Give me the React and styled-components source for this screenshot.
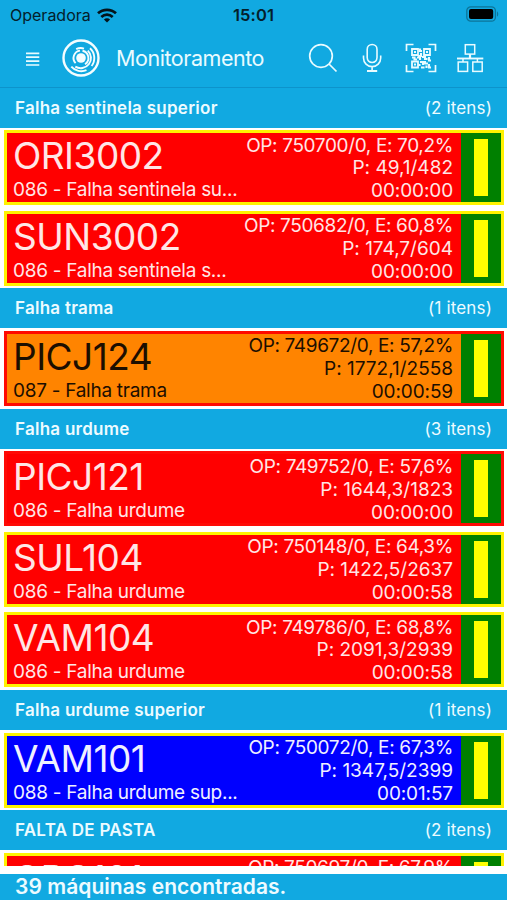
import React from 'react';
import styled, { createGlobalStyle } from 'styled-components'

const GlobalStyle = createGlobalStyle`
* { box-sizing: border-box; }
body {
  margin: 0;
  background: #fff;
  font-family: Inter, "Liberation Sans", sans-serif;
  font-feature-settings: "calt" 0;
}
`

const Container = styled.div`
height: 900px;
display: flex;
flex-direction: column;
overflow: hidden;
background: #fff;
`

const StatusBar = styled.div`
height: 30px;
padding: 0 8px 0 10px;
display: grid;
grid-template-columns: 1fr auto 1fr;
align-items: center;
background: #11a9e1;
color: #04202b;
font-size: 16px;
`

const Carrier = styled.div`
display: flex;
align-items: center;
gap: 6px;
`

const Clock = styled.div`
font-size: 16.5px;
font-weight: 600;
letter-spacing: 0.1px;
margin-right: 2px;
`

const BatteryBox = styled.div`
display: flex;
justify-content: flex-end;
padding-bottom: 2px;
`

const Header = styled.div`
height: 57.5px;
padding: 0 23px 0 25px;
display: flex;
align-items: center;
background: #11a9e1;
border-bottom: 1px solid #0d93cb;
color: #e9fbff;
`

const MenuButton = styled.div`
display: flex;
padding-top: 2px;
`

const Title = styled.h1`
margin: 0;
flex: 1;
padding: 0 0 1px 15px;
font-size: 21.5px;
font-weight: 400;
letter-spacing: -0.45px;
white-space: nowrap;
`

const Logo = styled.div`
display: flex;
padding-left: 21px;
`

const Actions = styled.div`
display: flex;
align-items: center;
`

const Action = styled.div`
display: flex;
margin-left: ${(props) => props.$gap || 0}px;
`

const List = styled.div`
height: 778px;
overflow: hidden;
`

const SectionHeader = styled.div`
height: 40px;
padding: 0 15px;
display: flex;
align-items: center;
justify-content: space-between;
background: #11a9e1;
color: #edfbff;
font-size: 17px;
`

const SectionTitle = styled.div`
font-weight: 600;
letter-spacing: 0.26px;
`

const SectionCount = styled.div`
letter-spacing: 0.15px;
`

const Row = styled.div`
height: 80.4px;
padding: 2.7px 3px 2.7px 4px;
`

const Card = styled.div`
height: 75px;
display: flex;
border: 3px solid ${(props) => props.$border};
background: ${(props) => props.$bg};
color: ${(props) => props.$color};
`

const Machine = styled.div`
flex: 1;
min-width: 0;
padding: 1px 0 0 6px;
display: flex;
flex-direction: column;
white-space: nowrap;
`

const MachineName = styled.div`
height: 44px;
line-height: 44px;
font-size: 37px;
letter-spacing: -0.5px;
`

const Reason = styled.div`
height: 24px;
line-height: 24px;
font-size: 19px;
letter-spacing: -0.28px;
`

const Numbers = styled.div`
padding: 1.4px 8px 0 0;
text-align: right;
font-size: 19px;
line-height: 22.9px;
white-space: nowrap;
`

const NumberLine = styled.div`
letter-spacing: ${(props) => props.$spacing || 0}px;
`

const Gauge = styled.div`
width: 40px;
padding-right: 1px;
display: flex;
align-items: center;
justify-content: center;
background: #008000;
`

const GaugeBar = styled.div`
width: 14px;
height: 57px;
background: #ff0;
`

const Footer = styled.div`
height: 26.5px;
margin-top: 8px;
padding-left: 15px;
line-height: 26px;
background: #11a9e1;
color: #edfbff;
font-size: 21px;
font-weight: 600;
letter-spacing: 0.04px;
`

const red = { bg: '#ff0000', border: '#fff200', color: '#ffe6e6' }
const redAlert = { bg: '#ff0000', border: '#ff0a06', color: '#ffe6e6' }
const orange = { bg: '#ff8400', border: '#ff0a00', color: '#1c0e00' }
const blue = { bg: '#0000ff', border: '#fff200', color: '#f0f0ff' }

const sections = [
  {
    title: 'Falha sentinela superior', count: 2, machines: [
      { name: 'ORI3002', reason: '086 - Falha sentinela su...', op: '750700/0', e: '70,2', p: '49,1/482', time: '00:00:00', look: red },
      { name: 'SUN3002', reason: '086 - Falha sentinela s...', op: '750682/0', e: '60,8', p: '174,7/604', time: '00:00:00', look: red },
    ]
  },
  {
    title: 'Falha trama', count: 1, machines: [
      { name: 'PICJ124', reason: '087 - Falha trama', op: '749672/0', e: '57,2', p: '1772,1/2558', time: '00:00:59', look: orange },
    ]
  },
  {
    title: 'Falha urdume', count: 3, machines: [
      { name: 'PICJ121', reason: '086 - Falha urdume', op: '749752/0', e: '57,6', p: '1644,3/1823', time: '00:00:00', look: redAlert },
      { name: 'SUL104', reason: '086 - Falha urdume', op: '750148/0', e: '64,3', p: '1422,5/2637', time: '00:00:58', look: red },
      { name: 'VAM104', reason: '086 - Falha urdume', op: '749786/0', e: '68,8', p: '2091,3/2939', time: '00:00:58', look: red },
    ]
  },
  {
    title: 'Falha urdume superior', count: 1, machines: [
      { name: 'VAM101', reason: '088 - Falha urdume sup...', op: '750072/0', e: '67,3', p: '1347,5/2399', time: '00:01:57', look: blue },
    ]
  },
  {
    title: 'FALTA DE PASTA', count: 2, machines: [
      { name: 'ORC101', op: '750697/0', e: '67,9', look: red },
    ]
  },
]

const WifiIcon = () => (
  <svg width="20" height="15" viewBox="0 0 20 15" fill="none" stroke="#04141b" strokeWidth="2.7">
    <path d="M1 5.3C6 0.6 14 0.6 19 5.3" />
    <path d="M4.3 8.9C7.6 5.9 12.4 5.9 15.7 8.9" />
    <path d="M10 14.5L6.9 11.4C8.6 9.9 11.4 9.9 13.1 11.4Z" fill="#04141b" stroke="none" />
  </svg>
)

const BatteryIcon = () => (
  <svg width="33" height="16" viewBox="0 0 33 16">
    <rect x="0.8" y="0.8" width="28.6" height="14.4" rx="4" fill="none" stroke="#0c7499" strokeWidth="1.3" />
    <rect x="3" y="3" width="24.2" height="10" rx="2" fill="#000" />
    <path d="M31 5.4C32.6 6 32.6 10 31 10.6Z" fill="#0c7499" />
  </svg>
)

const MenuIcon = () => (
  <svg width="15" height="14" viewBox="0 0 15 14" fill="none" stroke="currentColor" strokeWidth="1.7">
    <path d="M1 1.3H14.3M1 5.2H14.3M1 9.1H14.3M1 13H14.3" />
  </svg>
)

const LogoIcon = () => (
  <svg width="40" height="40" viewBox="0 0 40 40" fill="none" stroke="#f4fdff" strokeWidth="1.9">
    <circle cx="20" cy="20" r="17.5" strokeWidth="2.4" />
    <circle cx="20" cy="20" r="4.8" fill="#f4fdff" stroke="none" />
    <path d="M14.6 25.2A7.5 7.5 0 0 1 19 12.6" />
    <path d="M21.5 12.7A7.5 7.5 0 0 1 24 26.3" />
    <path d="M15.2 11.2A9.9 9.9 0 0 1 23 10.6" />
    <path d="M26.8 12.6A10.2 10.2 0 0 1 14.3 28.6" />
    <path d="M29 10.2A13.3 13.3 0 0 1 30.6 28" />
    <path d="M10.3 28.6A13.2 13.2 0 0 0 25.5 32.1" />
  </svg>
)

const SearchIcon = () => (
  <svg width="30" height="30" viewBox="0 0 30 30" fill="none" stroke="currentColor" strokeWidth="1.7">
    <circle cx="13" cy="13" r="11.3" />
    <path d="M21 21L28.5 28.5" />
  </svg>
)

const MicIcon = () => (
  <svg width="20" height="30" viewBox="0 0 20 30" fill="none" stroke="currentColor" strokeWidth="1.6">
    <rect x="5.2" y="1.5" width="9.8" height="18" rx="4.9" />
    <path d="M1.5 12.5V15A8.6 8.6 0 0 0 18.7 15V12.5M10.1 23.6V28" />
    <path d="M5 28H15.2" strokeWidth="2" />
  </svg>
)

const QrIcon = () => (
  <svg width="32" height="30" viewBox="0 0 32 30" fill="none" stroke="currentColor">
    <path d="M1.5 8V1.5H8.5M23.5 1.5H30.5V8M30.5 22V28.5H23.5M8.5 28.5H1.5V22" strokeWidth="1.7" />
    <path d="M7 6H13V12H7ZM19 6H25V12H19ZM7 18.5H13V24.5H7Z" strokeWidth="1.8" />
    <path d="M9 9H11M21 9H23M9 21.5H11" strokeWidth="2.2" />
    <path d="M15 5.5V8H17M16 10V13H13M7 14.5H9.5V16.5H12M12 14.5H15V17M17 14H20V16H22.5M24 14V17.5H26M15 19H18V22M20 18V20.5H23M16 24.5H19.5M21.5 22.5V25M24 21V24.5H26M14.5 21V23" strokeWidth="2.1" />
  </svg>
)

const NetworkIcon = () => (
  <svg width="28" height="30" viewBox="0 0 28 30" fill="none" stroke="currentColor" strokeWidth="1.5">
    <rect x="9.3" y="1.7" width="9.4" height="9.4" />
    <rect x="2.2" y="19" width="9.4" height="9.4" />
    <rect x="16.8" y="19" width="9.4" height="9.4" />
    <path d="M7 15V19M21.4 15V19" />
    <path d="M14 11V15" strokeWidth="2.2" />
    <path d="M1 15.5H27.3" strokeWidth="1.9" />
  </svg>
)

const MachineCard = ({ machine }) => {
  const { look } = machine
  return (
    <Row>
      <Card $bg={look.bg} $border={look.border} $color={look.color}>
        <Machine>
          <MachineName>{machine.name}</MachineName>
          {machine.reason && <Reason>{machine.reason}</Reason>}
        </Machine>
        <Numbers>
          <NumberLine $spacing={-0.36}>OP: {machine.op}, E: {machine.e}%</NumberLine>
          {machine.p && <NumberLine>P: {machine.p}</NumberLine>}
          {machine.time && <NumberLine $spacing={-0.12}>{machine.time}</NumberLine>}
        </Numbers>
        <Gauge><GaugeBar /></Gauge>
      </Card>
    </Row>
  )
}

const App = () => {
  return (
    <Container>
      <GlobalStyle />
      <StatusBar>
        <Carrier>Operadora <WifiIcon /></Carrier>
        <Clock>15:01</Clock>
        <BatteryBox><BatteryIcon /></BatteryBox>
      </StatusBar>
      <Header>
        <MenuButton><MenuIcon /></MenuButton>
        <Logo><LogoIcon /></Logo>
        <Title>Monitoramento</Title>
        <Actions>
          <Action><SearchIcon /></Action>
          <Action $gap={24}><MicIcon /></Action>
          <Action $gap={23}><QrIcon /></Action>
          <Action $gap={19}><NetworkIcon /></Action>
        </Actions>
      </Header>
      <List>
        {sections.map((section) => (
          <React.Fragment key={section.title}>
            <SectionHeader>
              <SectionTitle>{section.title}</SectionTitle>
              <SectionCount>({section.count} itens)</SectionCount>
            </SectionHeader>
            {section.machines.map((machine) => <MachineCard key={machine.name} machine={machine} />)}
          </React.Fragment>
        ))}
      </List>
      <Footer>39 máquinas encontradas.</Footer>
    </Container>
  )
}

export default App
